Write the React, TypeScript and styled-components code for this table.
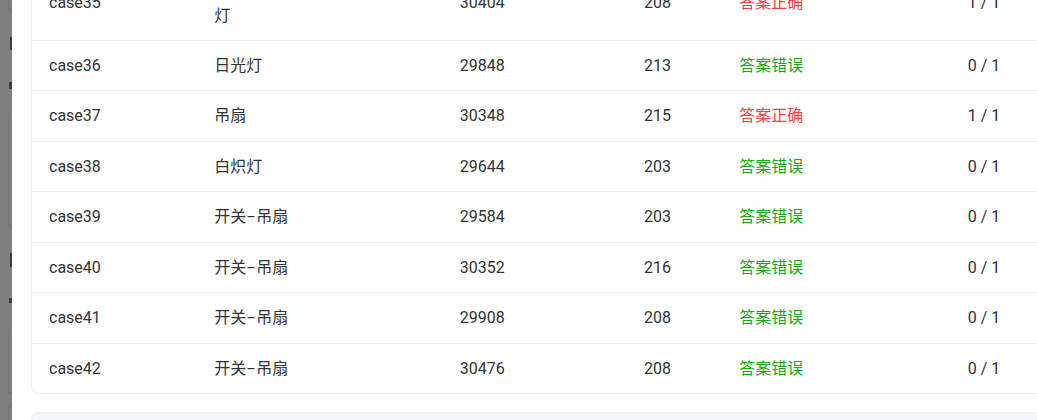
import React from "react";
import styled, { createGlobalStyle } from "styled-components";

const GlobalStyle = createGlobalStyle`
  html, body {
    margin: 0;
    padding: 0;
    overflow: hidden;
    background: #ffffff;
  }
  body {
    font-family: Roboto, "Noto Sans CJK SC", sans-serif;
    color: #333333;
  }
`;

type Result = "right" | "wrong";

interface CaseRow {
  id: string;
  name: string;
  time: number;
  memory: number;
  result: Result;
  score: string;
}

const rows: CaseRow[] = [
  { id: "case35", name: "开关-白炽灯-吊扇-日光\n灯", time: 30404, memory: 208, result: "right", score: "1 / 1" },
  { id: "case36", name: "日光灯", time: 29848, memory: 213, result: "wrong", score: "0 / 1" },
  { id: "case37", name: "吊扇", time: 30348, memory: 215, result: "right", score: "1 / 1" },
  { id: "case38", name: "白炽灯", time: 29644, memory: 203, result: "wrong", score: "0 / 1" },
  { id: "case39", name: "开关-吊扇", time: 29584, memory: 203, result: "wrong", score: "0 / 1" },
  { id: "case40", name: "开关-吊扇", time: 30352, memory: 216, result: "wrong", score: "0 / 1" },
  { id: "case41", name: "开关-吊扇", time: 29908, memory: 208, result: "wrong", score: "0 / 1" },
  { id: "case42", name: "开关-吊扇", time: 30476, memory: 208, result: "wrong", score: "0 / 1" },
];

const Page = styled.div`
  display: flex;
  height: 420px;
  overflow: hidden;
`;

/* dimmed page behind the drawer */
const Backdrop = styled.div`
  width: 12px;
  flex-shrink: 0;
  background: #7f7f7f;
  display: flex;
  flex-direction: column;
  align-items: flex-end;
  overflow: hidden;
`;

const GhostBox = styled.div<{ $top: number; $height: number }>`
  width: 3px;
  height: ${(p) => p.$height}px;
  margin-top: ${(p) => p.$top}px;
  border: 1px solid #747474;
  border-right: none;
  border-radius: 4px 0 0 4px;
  flex-shrink: 0;
`;

const Mark = styled.div<{ $top: number; $height: number; $width: number }>`
  width: ${(p) => p.$width}px;
  height: ${(p) => p.$height}px;
  margin-top: ${(p) => p.$top}px;
  background: #3b2a22;
  opacity: 0.8;
  flex-shrink: 0;
`;

const Drawer = styled.div`
  flex: 1;
  min-width: 0;
  background: #ffffff;
  padding: 0 0 0 19px;
  display: flex;
  flex-direction: column;
  gap: 18px;
`;

const TableCard = styled.div`
  width: 1070px;
  flex-shrink: 0;
  margin-top: -35.86px;
  border: 1px solid #ebeef5;
  border-radius: 8px;
  overflow: hidden;
  background: #ffffff;
`;

const Table = styled.table`
  width: 100%;
  table-layout: fixed;
  border-collapse: collapse;
  font-size: 16px;
`;

const Row = styled.tr`
  &:last-child td {
    border-bottom: none;
  }
`;

const Cell = styled.td<{ $width: number }>`
  box-sizing: border-box;
  width: ${(p) => p.$width}px;
  padding: 12px 17px;
  line-height: 25.43px;
  border-bottom: 1px solid #ebeef5;
  vertical-align: middle;
  white-space: pre-line;
  color: #333333;
`;

const Sep = styled.span`
  display: inline-block;
  width: 10px;
  text-align: center;
  transform: scaleX(1.8);
`;

const Verdict = styled.span<{ $result: Result }>`
  color: ${(p) => (p.$result === "right" ? "#f5403d" : "#18a818")};
`;

const FooterCard = styled.div`
  width: 1070px;
  height: 60px;
  flex-shrink: 0;
  background: #f5f7fa;
  border: 1px solid #ebeef5;
  border-radius: 8px;
`;

const widths = [165, 245, 184, 95, 228, 151];

const DeviceName = ({ name }: { name: string }) => {
  const parts = name.split("-");
  return (
    <>
      {parts.map((part, i) => (
        <React.Fragment key={i}>
          {i > 0 && <Sep>-</Sep>}
          {part}
        </React.Fragment>
      ))}
    </>
  );
};

const App = () => {
  return (
    <Page>
      <GlobalStyle />
      <Backdrop>
        <GhostBox $top={-10} $height={20} />
        <Mark $top={25} $width={2} $height={13} />
        <Mark $top={32} $width={3} $height={7} />
        <GhostBox $top={22} $height={115} />
        <Mark $top={25} $width={2} $height={14} />
        <Mark $top={31} $width={3} $height={5} />
        <GhostBox $top={24} $height={65} />
        <GhostBox $top={10} $height={40} />
      </Backdrop>
      <Drawer>
        <TableCard>
          <Table>
            <tbody>
              {rows.map((r) => (
                <Row key={r.id}>
                  <Cell $width={widths[0]}>{r.id}</Cell>
                  <Cell $width={widths[1]}>
                    <DeviceName name={r.name} />
                  </Cell>
                  <Cell $width={widths[2]}>{r.time}</Cell>
                  <Cell $width={widths[3]}>{r.memory}</Cell>
                  <Cell $width={widths[4]}>
                    <Verdict $result={r.result}>
                      {r.result === "right" ? "答案正确" : "答案错误"}
                    </Verdict>
                  </Cell>
                  <Cell $width={widths[5]}>{r.score}</Cell>
                </Row>
              ))}
            </tbody>
          </Table>
        </TableCard>
        <FooterCard />
      </Drawer>
    </Page>
  );
};

export default App;
